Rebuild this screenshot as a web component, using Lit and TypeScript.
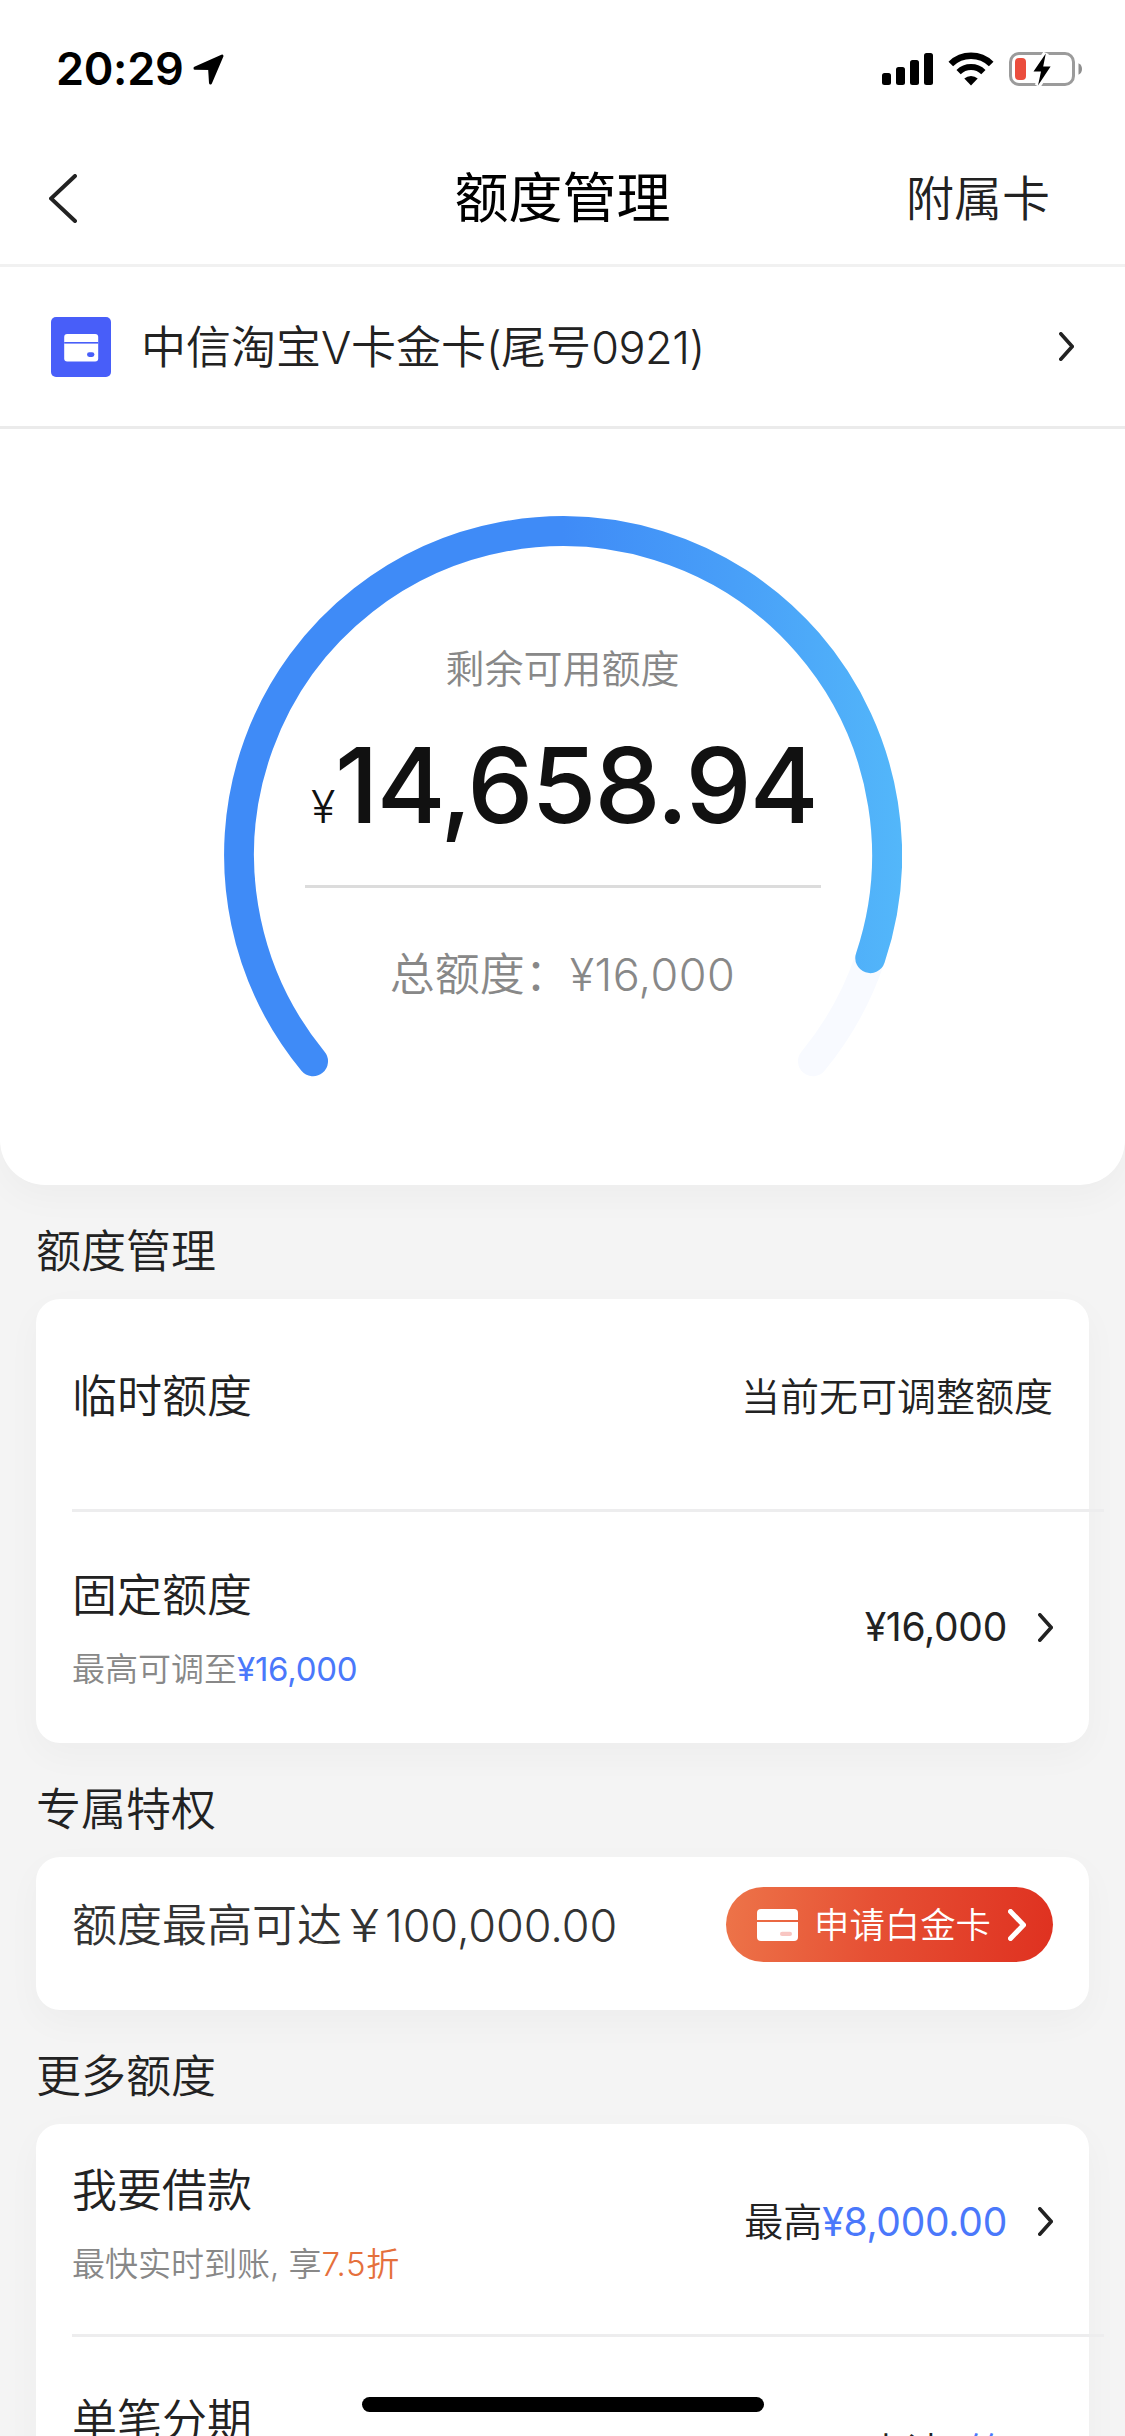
import { LitElement, html, css, nothing, type TemplateResult } from "lit";
import { customElement, property } from "lit/decorators.js";

@customElement("chevron-icon")
class ChevronIcon extends LitElement {
  @property({ type: Number }) w = 16;
  @property({ type: Number }) h = 32;
  @property({ type: Number }) stroke = 3.6;
  @property({ type: Boolean }) back = false;

  static styles = css`
    :host { display: block; flex: none; line-height: 0; }
  `;

  render() {
    const s = this.stroke / 2;
    const l = s;
    const r = this.w - s;
    const [a, b] = this.back ? [r, l] : [l, r];
    return html`<svg width=${this.w} height=${this.h} viewBox="0 0 ${this.w} ${this.h}">
      <path d="M${a} ${s}L${b} ${this.h / 2}L${a} ${this.h - s}" fill="none" stroke="currentColor"
        stroke-width=${this.stroke} stroke-linecap="round" stroke-linejoin="miter" />
    </svg>`;
  }
}

@customElement("status-bar")
class StatusBar extends LitElement {
  static styles = css`
    :host { display: flex; height: 132px; padding: 0 41px 0 56px; box-sizing: border-box; color: #000; }
    .left { display: flex; align-items: flex-start; flex: 1; padding-top: 42px; }
    .time { font: 600 45px/54px Inter, sans-serif; letter-spacing: -0.3px; width: 137px; white-space: nowrap; }
    .arrow { margin-top: 12px; }
    .right { display: flex; gap: 15px; padding-top: 52px; }
    svg { display: block; }
  `;

  render() {
    return html`
      <div class="left">
        <span class="time">20:29</span>
        <svg class="arrow" width="31" height="31" viewBox="0 0 31 31">
          <path d="M29 2L17.5 29L16.6 14.4L2 14.2Z" fill="#000" stroke="#000" stroke-width="3" stroke-linejoin="round" />
        </svg>
      </div>
      <div class="right">
        <svg width="51" height="34" viewBox="0 0 51 34">
          <rect x="0" y="21" width="9" height="12" rx="2.5" />
          <rect x="14" y="15" width="9" height="18" rx="2.5" />
          <rect x="28" y="8" width="9" height="25" rx="2.5" />
          <rect x="42" y="1" width="9" height="32" rx="2.5" />
        </svg>
        <svg width="46" height="34" viewBox="0 0 46 34">
          <path d="M23 33.4L16.3 26.6A9.6 9.6 0 0 1 29.7 26.6Z" />
          <path d="M10.6 20.2A17.6 17.6 0 0 1 35.4 20.2" fill="none" stroke="#000" stroke-width="6" />
          <path d="M2.8 12A29 29 0 0 1 43.2 12" fill="none" stroke="#000" stroke-width="6.6" />
        </svg>
        <svg width="75" height="34" viewBox="0 0 75 34">
          <rect x="1.5" y="1.5" width="63" height="31" rx="8.5" fill="none" stroke="#9b9b9b" stroke-width="3" />
          <path d="M69.5 11.2Q73 13 73 17Q73 21 69.5 22.8Z" fill="#8e8e8e" />
          <rect x="6" y="6" width="11" height="22" rx="4" fill="#eb4d3d" />
          <path d="M36.8 1.5L24.5 19.5H32L29 33.5L41.6 14.6H34.2Z" fill="#fff" stroke="#fff" stroke-width="6" />
          <path d="M36.8 1.5L24.5 19.5H32L29 33.5L41.6 14.6H34.2Z" fill="#000" />
        </svg>
      </div>
    `;
  }
}

@customElement("limit-gauge")
class LimitGauge extends LitElement {
  static styles = css`
    :host { display: grid; justify-content: center; padding-top: 87px; height: 669px; }
    .arc, .info { grid-area: 1 / 1; }
    .arc { display: block; }
    .info { display: flex; flex-direction: column; align-items: center; padding-top: 126px; }
    .label { font-size: 39px; line-height: 54px; color: #888; }
    .amount { display: flex; align-items: baseline; height: 100px; color: #111; line-height: 100px; margin-top: 39px; width: 503px; }
    .sign { font-size: 45px; width: 24px; flex: none; }
    .value { font: 500 105px/100px Inter, sans-serif; letter-spacing: -1.9px; white-space: nowrap; }
    .rule { width: 516px; height: 3px; background: #dcdcdc; margin-top: 50px; }
    .total { font-size: 45px; line-height: 60px; color: #888; margin-top: 57px; white-space: nowrap; }
    .num { letter-spacing: 0.009em; }
  `;

  render() {
    return html`
      <svg class="arc" width="678" height="564" viewBox="0 0 678 564">
        <defs>
          <linearGradient id="g" gradientUnits="userSpaceOnUse" x1="339" y1="0" x2="678" y2="0">
            <stop offset="0" stop-color="#3f8bf7" />
            <stop offset=".5" stop-color="#489ff8" />
            <stop offset="1" stop-color="#53b7fa" />
          </linearGradient>
        </defs>
        <g fill="none" stroke-width="30" stroke-linecap="round">
          <path d="M89 545.2A324 324 0 1 1 589 545.2" stroke="#f8faff" />
          <path d="M89 545.2A324 324 0 1 1 646.3 442.1" stroke="url(#g)" />
        </g>
      </svg>
      <div class="info">
        <div class="label">剩余可用额度</div>
        <div class="amount"><span class="sign">¥</span><span class="value">14,658.94</span></div>
        <div class="rule"></div>
        <div class="total">总额度：<span class="num">¥16,000</span></div>
      </div>
    `;
  }
}

interface Row {
  title: string;
  sub?: TemplateResult;
  value: TemplateResult | string;
  arrow?: boolean;
  reserve?: boolean;
}

@customElement("limit-card")
class LimitCard extends LitElement {
  @property({ attribute: false }) rows: Row[] = [];

  static styles = css`
    :host { display: block; margin: 0 36px; background: #fff; border-radius: 24px; box-shadow: 0 12px 36px rgba(0, 0, 0, 0.03); }
    .row { display: flex; align-items: center; justify-content: space-between; height: 231px; padding: 0 36px 1px; box-sizing: border-box; }
    .row:first-child { height: 210px; padding-bottom: 15px; }
    .rule { height: 3px; margin: 0 -15px 0 36px; background: #ededee; }
    .title { font-size: 45px; line-height: 63px; color: #222; }
    .sub { font-size: 33px; line-height: 42px; min-height: 42px; margin-top: 21px; color: #888; }
    .right { display: flex; align-items: center; gap: 31px; font-size: 39px; line-height: 54px; color: #222; }
    .num { letter-spacing: -0.007em; font-weight: 400; }
    .blue { color: #4a78fb; }
    .orange { color: #e5703c; letter-spacing: 0.02em; }
  `;

  render() {
    return this.rows.map(
      (r, i) => html`
        ${i ? html`<div class="rule"></div>` : nothing}
        <div class="row">
          <div>
            <div class="title">${r.title}</div>
            ${r.sub || r.reserve ? html`<div class="sub">${r.sub ?? nothing}</div>` : nothing}
          </div>
          <div class="right">
            <span>${r.value}</span>
            ${r.arrow ? html`<chevron-icon .w=${15} .h=${29}></chevron-icon>` : nothing}
          </div>
        </div>
      `
    );
  }
}

@customElement("app-root")
class AppRoot extends LitElement {
  static styles = css`
    :host {
      display: block; position: relative; width: 1125px; height: 2436px; overflow: hidden;
      background: #f4f4f4; color: #222; font-family: Inter, "Noto Sans CJK SC", sans-serif; font-weight: 350;
    }
    .sheet { height: 1185px; background: #fff; border-radius: 0 0 45px 45px; box-shadow: 0 12px 36px rgba(0, 0, 0, 0.03); }
    .nav { display: grid; grid-template-columns: 1fr auto 1fr; align-items: center; height: 132px; padding: 0 75px 0 49px; border-bottom: 3px solid #f1f1f1; }
    .nav h1 { margin: 1px 0 0 26px; font-size: 54px; font-weight: 400; line-height: 72px; color: #000; }
    .extra { justify-self: end; font-size: 48px; line-height: 66px; margin-top: 2px; }
    .account { display: flex; align-items: center; height: 159px; padding: 0 51px; border-bottom: 3px solid #ebebeb; }
    .account .name { flex: 1; font-size: 45px; line-height: 60px; margin: 2px 0 0 30px; }
    .account .num { letter-spacing: -0.01em; }
    .section { margin: 0; padding: 43px 36px 23px; font-size: 45px; font-weight: inherit; line-height: 48px; }
    .perk { display: flex; justify-content: space-between; height: 153px; box-sizing: border-box; margin: 0 36px; padding: 30px 36px 0; background: #fff; border-radius: 24px; box-shadow: 0 12px 36px rgba(0, 0, 0, 0.03); }
    .perk .text { font-size: 45px; line-height: 77px; color: #333; }
    .perk .num { letter-spacing: -0.002em; margin-left: -2px; }
    .apply { display: flex; align-items: center; width: 327px; height: 75px; box-sizing: border-box; padding: 0 27px 0 31px; border-radius: 38px; background: linear-gradient(97deg, #ed7449, #e65034 45%, #df3120); color: #fff; font-size: 35.4px; line-height: 75px; }
    .apply span { flex: 1; margin: 1px 0 0 16px; }
    .home { position: absolute; left: 362px; top: 2397px; width: 402px; height: 15px; border-radius: 8px; background: #000; }
    svg { display: block; flex: none; }
  `;

  private manage: Row[] = [
    { title: "临时额度", value: "当前无可调整额度" },
    {
      title: "固定额度",
      sub: html`最高可调至<span class="num blue">¥16,000</span>`,
      value: html`<span class="num">¥16,000</span>`,
      arrow: true,
    },
  ];

  private more: Row[] = [
    {
      title: "我要借款",
      sub: html`最快实时到账, 享<span class="orange">7.5折</span>`,
      value: html`最高<span class="num blue">¥8,000.00</span>`,
      arrow: true,
    },
    {
      title: "单笔分期",
      reserve: true,
      value: html`可申请<span class="blue">6笔</span>`,
      arrow: true,
    },
  ];

  render() {
    return html`
      <div class="sheet">
        <status-bar></status-bar>
        <div class="nav">
          <chevron-icon back .w=${28} .h=${49} .stroke=${4}></chevron-icon>
          <h1>额度管理</h1>
          <div class="extra">附属卡</div>
        </div>
        <div class="account">
          <svg width="60" height="60" viewBox="0 0 60 60">
            <rect width="60" height="60" rx="5" fill="#485ef9" />
            <rect x="13.2" y="17" width="34" height="27.5" rx="3" fill="#fff" />
            <rect x="13.2" y="25" width="34" height="1.6" fill="#485ef9" />
            <rect x="36" y="35.3" width="7.4" height="4.6" rx="2.3" fill="#485ef9" />
          </svg>
          <div class="name">中信淘宝<span class="num">V</span>卡金卡<span class="num">(</span>尾号<span class="num">0921)</span></div>
          <chevron-icon .w=${15} .h=${29}></chevron-icon>
        </div>
        <limit-gauge></limit-gauge>
      </div>

      <h2 class="section">额度管理</h2>
      <limit-card .rows=${this.manage}></limit-card>

      <h2 class="section">专属特权</h2>
      <div class="perk">
        <div class="text">额度最高可达￥<span class="num">100,000.00</span></div>
        <div class="apply">
          <svg width="41" height="32" viewBox="0 0 41 32">
            <path d="M0 11V4Q0 0 4 0H37Q41 0 41 4V11Z" fill="#fff" />
            <path d="M0 13H41V28Q41 32 37 32H4Q0 32 0 28Z" fill="#fff" />
            <rect x="23" y="22.8" width="12" height="4.2" rx="2.1" fill="#f8c6c2" />
          </svg>
          <span>申请白金卡</span>
          <chevron-icon .w=${18} .h=${32} .stroke=${5}></chevron-icon>
        </div>
      </div>

      <h2 class="section">更多额度</h2>
      <limit-card .rows=${this.more}></limit-card>
      <div class="home"></div>
    `;
  }
}
